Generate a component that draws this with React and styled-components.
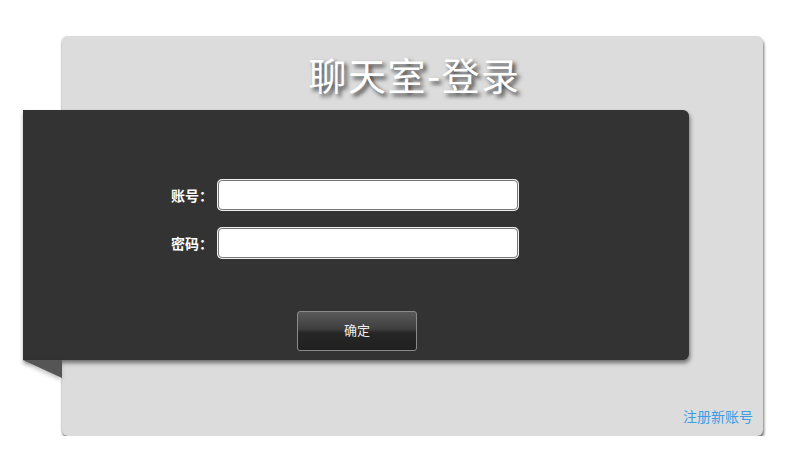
import styled, { createGlobalStyle } from "styled-components";

const Global = createGlobalStyle`
  html, body { margin: 0; padding: 0; background: #fff; }
  body { font-family: "Liberation Sans", "Noto Sans CJK SC", sans-serif; }
`;

export default function App() {
  return (
    <>
      <Global />
      <Page>
        <Panel>
          <Title>聊天室-登录</Title>
          <Board>
            <Row>
              <Label>账号：</Label>
              <Input type="text" />
            </Row>
            <Row>
              <Label>密码：</Label>
              <Input type="password" />
            </Row>
            <Submit>确定</Submit>
          </Board>
          <Footer>
            <Link href="#">注册新账号</Link>
          </Footer>
        </Panel>
      </Page>
    </>
  );
}

const Page = styled.div`
  padding: 36px 0 0 62px;
`;

const Panel = styled.div`
  width: 701px;
  height: 400px;
  background: #dcdcdc;
  border-radius: 6px;
  box-shadow: 1px 3px 3px rgba(0, 0, 0, 0.55), -1px 0 1px rgba(0, 0, 0, 0.12);
  display: flex;
  flex-direction: column;
`;

const Title = styled.h1`
  margin: 0;
  height: 74px;
  line-height: 76px;
  text-align: center;
  font-family: "Noto Sans CJK SC", sans-serif;
  font-weight: 400;
  font-size: 38px;
  color: #fff;
  text-shadow: 3px 3px 4px #333;
  letter-spacing: 1.5px;
  padding-left: 4px;
`;

const Board = styled.div`
  position: relative;
  margin-left: -39px;
  width: 666px;
  height: 250px;
  box-sizing: border-box;
  padding: 70px 0 0 148px;
  background: #333;
  border-radius: 0 6px 6px 0;
  box-shadow: 1px 3px 4px rgba(0, 0, 0, 0.5);
  display: flex;
  flex-direction: column;
  gap: 18px;
  &::after {
    content: "";
    position: absolute;
    left: 0;
    top: 250px;
    width: 0;
    height: 0;
    border-top: 18px solid #555;
    border-left: 39px solid transparent;
    filter: drop-shadow(-1px 2px 2px rgba(0, 0, 0, 0.25));
  }
`;

const Row = styled.div`
  display: flex;
  align-items: center;
`;

const Label = styled.label`
  width: 47px;
  font-size: 14px;
  font-weight: bold;
  color: #fff;
  font-family: "Noto Sans CJK SC", sans-serif;
`;

const Input = styled.input`
  width: 300px;
  height: 30px;
  box-sizing: border-box;
  border: 1px solid #777;
  border-radius: 4px;
  background: #fff;
  box-shadow: 0 0 0 1px #eee;
  outline: none;
  padding: 0 6px;
  font-size: 14px;
`;

const Submit = styled.button`
  align-self: flex-start;
  margin: 35px 0 0 126px;
  width: 120px;
  height: 40px;
  padding: 0 0 3px;
  border: 1px solid #8a8a8a;
  border-radius: 3px;
  background: linear-gradient(#5a5a5a 0%, #3e3e3e 45%, #262626 55%, #202020 100%);
  color: #eee;
  font-size: 13px;
  font-family: "Noto Sans CJK SC", sans-serif;
  cursor: pointer;
`;

const Footer = styled.div`
  margin-top: auto;
  display: flex;
  justify-content: flex-end;
  padding: 0 10px 10px 0;
`;

const Link = styled.a`
  color: #3a9de6;
  font-size: 14px;
  text-decoration: none;
  font-family: "Noto Sans CJK SC", sans-serif;
`;
